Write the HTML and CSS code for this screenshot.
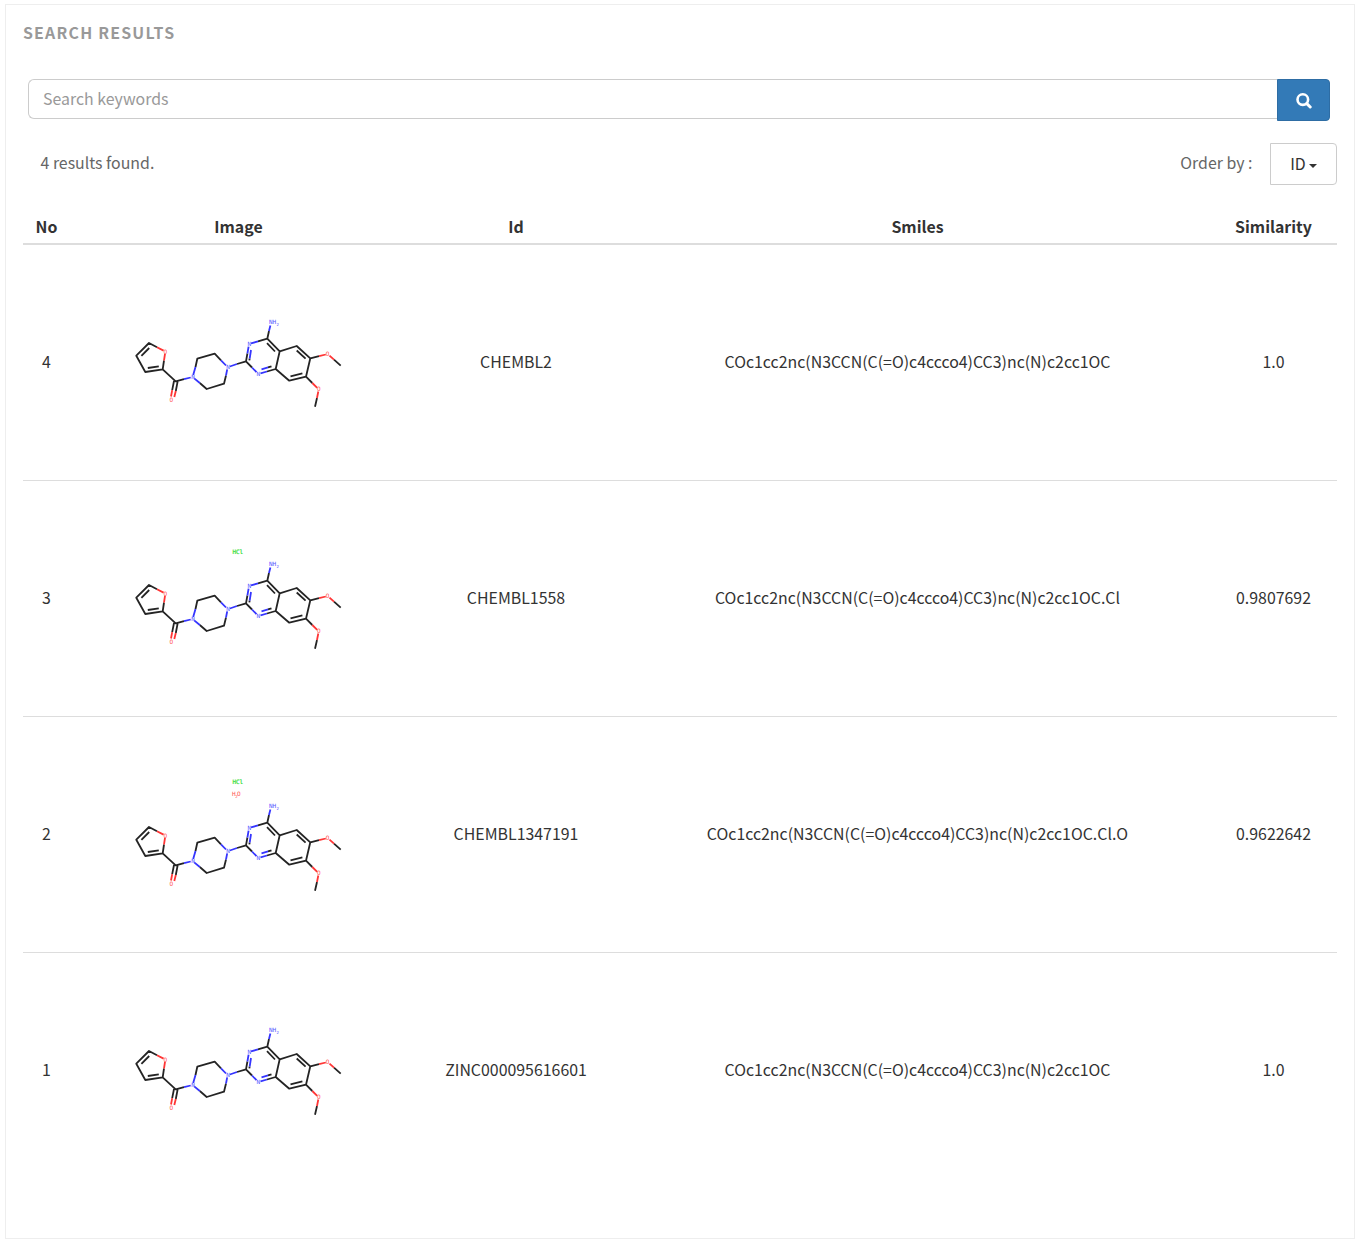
FILE: index.html
```html
<!DOCTYPE html>
<html lang="en">
<head>
<meta charset="utf-8">
<title>Search results</title>
<link rel="stylesheet" href="styles.css">
</head>
<body>
<main class="panel">
  <h1 class="title">Search results</h1>
  <form class="search">
    <input class="search-input" type="text" placeholder="Search keywords">
    <button class="search-button" type="button" aria-label="Search">
      <svg width="16" height="16" viewBox="0 0 16 16"><circle cx="6.8" cy="6.6" r="5.3" fill="none" stroke="#fff" stroke-width="2.6"/><path d="M10.8 10.6L14.2 14" stroke="#fff" stroke-width="3" stroke-linecap="round"/></svg>
    </button>
  </form>
  <div class="toolbar">
    <span class="found">4 results found.</span>
    <span class="order">Order by :</span>
    <button class="dropdown" type="button"><span class="dropdown-label">ID</span><span class="caret"></span></button>
  </div>
  <table class="results">
    <colgroup><col class="col-no"><col class="col-image"><col class="col-id"><col class="col-smiles"><col class="col-sim"></colgroup>
    <thead><tr><th>No</th><th>Image</th><th>Id</th><th>Smiles</th><th>Similarity</th></tr></thead>
    <tbody>
      <tr><td>4</td><td class="picture"><svg class="molecule" viewBox="0 0 220 220">
        <g id="mol" transform="translate(-129 -252)">
          <!-- carbon halves of the bonds -->
          <path class="bond c" d="M157 347.2L149 343L136.3 355.7L145.3 372L162.7 369.3L164 360.5M149.2 348L141.4 355.8M147.8 368L158.8 366.3M162.7 369.3L175.7 381.3L184 379.2M174 381L172.2 390.2M177.6 381.6L175.8 391M195.5 367L197.3 358.7L214.7 353.7L221 360.3M226 375.5L224 383.7L206.7 389L199.8 383M237 364L246 361.3L247.4 353.5M258 341.4L267.3 338.7L269 331M267.3 338.7L279.7 351.3L275.7 369L267 371.5M267 343.2L275 351.5M279.7 351.3L296.7 346L310.3 358.3L306 376.7L289.3 380.7L275.7 369M296.7 350.5L305.6 358.7M302.4 373.4L290.5 376.4M310.3 358.3L319 356.2M334 359.7L340.7 365.7M306 376.7L312.3 383M317 398L315 406.7M246 361.3L252 367.5M268 367.4L271.5 366.3M249.7 358.5L249.3 360.4"/>
          <!-- nitrogen halves -->
          <path class="bond n" d="M184 379.2L190.7 377.5M193.2 375L195.5 367M194.2 378.4L199.8 383M221 360.3L226 365.5M227.2 369.3L226 375.5M229.8 366.5L237 364M247.4 353.5L248.6 346.6M249.7 358.5L251 350M251 343.4L258 341.4M269 331L270.4 325.5M252 367.5L256.5 372.2M260.5 373.4L267 371.5M261.5 369.3L268 367.4"/>
          <!-- oxygen halves -->
          <path class="bond o" d="M157 347.2L163.6 350.6M164 360.5L165 353.8M172.2 390.2L171 396.5M175.8 391L174.3 397M319 356.2L325.8 354.5M329.5 355.6L334 359.7M312.3 383L317.2 387.8M318.3 391.5L317 398"/>
          <g class="atom n">
            <text x="193" y="379">N</text><text x="228" y="369">N</text>
            <text x="249.2" y="346">N</text><text x="258.2" y="376">N</text>
            <text x="272.6" y="324">NH</text><text class="sub" x="277.8" y="325.5">2</text>
          </g>
          <g class="atom o">
            <text x="165.4" y="353.7">O</text><text x="171.3" y="401.6">O</text>
            <text x="327.6" y="356">O</text><text x="318.8" y="391.3">O</text>
          </g>
        </g>
      </svg></td><td>CHEMBL2</td><td>COc1cc2nc(N3CCN(C(=O)c4ccco4)CC3)nc(N)c2cc1OC</td><td>1.0</td></tr>
      <tr><td>3</td><td class="picture"><svg class="molecule" viewBox="0 0 220 220"><use href="#mol" y="6"/><text class="atom cl" x="108.8" y="65.5">HCl</text></svg></td><td>CHEMBL1558</td><td>COc1cc2nc(N3CCN(C(=O)c4ccco4)CC3)nc(N)c2cc1OC.Cl</td><td>0.9807692</td></tr>
      <tr><td>2</td><td class="picture"><svg class="molecule" viewBox="0 0 220 220"><use href="#mol" y="12"/><text class="atom cl" x="108.8" y="59.5">HCl</text><g class="atom o"><text x="104.7" y="72">H</text><text class="sub" x="107.4" y="73.9">2</text><text x="109.9" y="72">O</text></g></svg></td><td>CHEMBL1347191</td><td>COc1cc2nc(N3CCN(C(=O)c4ccco4)CC3)nc(N)c2cc1OC.Cl.O</td><td>0.9622642</td></tr>
      <tr><td>1</td><td class="picture"><svg class="molecule" viewBox="0 0 220 220"><use href="#mol"/></svg></td><td>ZINC000095616601</td><td>COc1cc2nc(N3CCN(C(=O)c4ccco4)CC3)nc(N)c2cc1OC</td><td>1.0</td></tr>
    </tbody>
  </table>
</main>
</body>
</html>
```

FILE: styles.css
```css
* { box-sizing: border-box; }
body {
  margin: 0;
  padding: 4px 12px 10px 5px;
  background: #fff;
  color: #333;
  font: 15.9px/24px "Noto Sans CJK KR", "Noto Sans", sans-serif;
}
button, input { font: inherit; }
.panel {
  height: 1235px;
  padding: 16px 17px;
  border: 1px solid #eee;
}
.title {
  margin: 0;
  font-size: 15.9px;
  line-height: 24px;
  font-weight: 700;
  letter-spacing: 1.2px;
  text-transform: uppercase;
  color: #999;
}
.search {
  display: flex;
  align-items: flex-start;
  margin: 34px 7px 0 5px;
}
.search-input {
  flex: 1;
  min-width: 0;
  height: 40px;
  padding: 5px 14px 7px;
  border: 1px solid #ccc;
  border-right: 0;
  border-radius: 6px 0 0 6px;
  background: #fff;
  outline: 0;
}
.search-input::placeholder { color: #999; opacity: 1; }
.search-button {
  display: flex;
  align-items: center;
  justify-content: center;
  width: 53px;
  height: 42px;
  padding: 1px 0 0;
  border: 1px solid #2e6da4;
  border-radius: 0 4px 4px 0;
  background: #337ab7;
}
.toolbar {
  display: flex;
  align-items: center;
  height: 42px;
  margin-top: 22px;
  color: #666;
}
.found { margin: 0 auto 2px 17.5px; }
.order { margin: 0 17.5px 2px 0; }
.dropdown {
  display: flex;
  align-items: center;
  justify-content: center;
  width: 67px;
  height: 42px;
  padding: 0;
  border: 1px solid #ccc;
  border-radius: 0 4px 4px 0;
  background: #fff;
  color: #333;
}
.caret {
  margin: 4px 0 0 3px;
  border-top: 4px solid #333;
  border-left: 4.5px solid transparent;
  border-right: 4.5px solid transparent;
}
.results {
  width: 1314px;
  margin-top: 22px;
  table-layout: fixed;
  border-spacing: 0;
  text-align: center;
}
.col-no { width: 47px; }
.col-image { width: 337px; }
.col-id { width: 218px; }
.col-smiles { width: 585px; }
.col-sim { width: 127px; }
.results th {
  height: 38px;
  padding: 3px 0 0;
  border-bottom: 2px solid #ddd;
  font-weight: 700;
}
.results td {
  height: 236px;
  padding: 0 0 2px;
  border-top: 1px solid #ddd;
  vertical-align: middle;
}
.results tbody tr:first-child td { height: 235px; border-top: 0; }
.molecule {
  display: block;
  width: 220px;
  height: 220px;
  margin: 0 auto;
  opacity: 0.99;
}
.bond {
  fill: none;
  stroke-width: 1.8;
  stroke-linejoin: round;
  stroke-linecap: butt;
}
.bond.c { stroke: #222; }
.bond.n { stroke: #33f; }
.bond.o { stroke: #f33; }
.atom {
  font: 6px/1 "DejaVu Sans Mono", monospace;
  text-anchor: middle;
}
.atom.n { fill: #55f; }
.atom.o { fill: #f55; }
.atom.cl { fill: #3d3; stroke: #3d3; stroke-width: 0.2; }
.sub { font-size: 4px; }
```
